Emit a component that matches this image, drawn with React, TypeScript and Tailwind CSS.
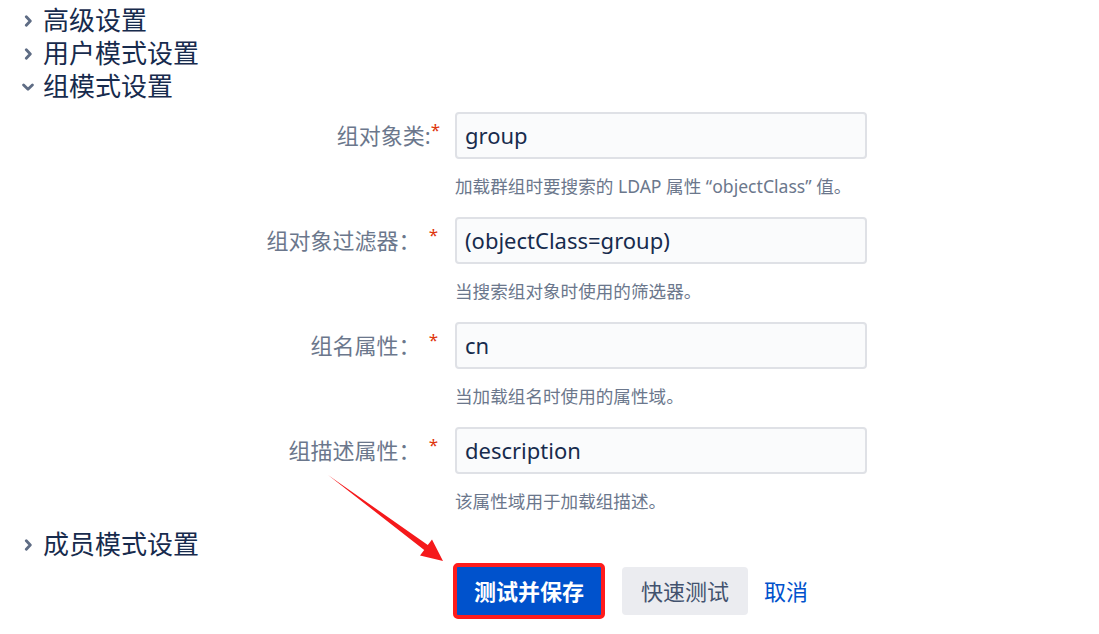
import React from "react";

const FONT = '"Noto Sans", "Noto Sans CJK SC", sans-serif';

function ChevronRight() {
  return (
    <svg width="12" height="12" viewBox="0 0 12 12" className="shrink-0">
      <path d="M4.3 1.8 L8.3 6 L4.3 10.2" fill="none" stroke="#5e6c84" strokeWidth="2.8" strokeLinecap="round" strokeLinejoin="round" />
    </svg>
  );
}

function ChevronDown() {
  return (
    <svg width="12" height="12" viewBox="0 0 12 12" className="shrink-0">
      <path d="M1.6 4 L6 8.2 L10.4 4" fill="none" stroke="#5e6c84" strokeWidth="2.8" strokeLinecap="round" strokeLinejoin="round" />
    </svg>
  );
}

function Heading({ open, text }: { open?: boolean; text: string }) {
  return (
    <div className="flex items-center pl-[22px] gap-[9px] h-[33px] text-[26px] leading-[33px] text-[#172b4d]">
      {open ? <ChevronDown /> : <ChevronRight />}
      <span>{text}</span>
    </div>
  );
}

type Row = { label: string; tight?: boolean; value: string; help: string };

const rows: Row[] = [
  { label: "组对象类:", tight: true, value: "group", help: "加载群组时要搜索的 LDAP 属性 “objectClass” 值。" },
  { label: "组对象过滤器：", value: "(objectClass=group)", help: "当搜索组对象时使用的筛选器。" },
  { label: "组名属性：", value: "cn", help: "当加载组名时使用的属性域。" },
  { label: "组描述属性：", value: "description", help: "该属性域用于加载组描述。" },
];

export default function App() {
  return (
    <div className="relative w-[1099px] h-[634px] bg-white overflow-hidden" style={{ fontFamily: FONT }}>
      <div className="pt-[4px]">
        <Heading text="高级设置" />
        <Heading text="用户模式设置" />
        <Heading open text="组模式设置" />
      </div>

      <div className="mt-[9px] flex flex-col gap-[20px]">
        {rows.map((r) => (
          <div key={r.label} className="flex">
            <div className="w-[440px] h-[47px] flex items-center justify-end text-[22px] text-[#6b778c]">
              <span>{r.label}</span>
              {r.tight ? (
                <span className="self-start mt-[9px] text-[17px] leading-[17px] text-[#de350b]">*</span>
              ) : (
                <span className="self-start mt-[9px] ml-[8px] mr-[2px] text-[17px] leading-[17px] text-[#de350b]">*</span>
              )}
            </div>
            <div className="ml-[15px] w-[412px]">
              <div className="h-[47px] rounded-[4px] border-2 border-[#dfe1e6] bg-[#fafbfc] flex items-center pl-[8px] text-[22px] text-[#172b4d]">
                {r.value}
              </div>
              <div className="mt-[16px] text-[17.6px] leading-[22px] text-[#6b778c] whitespace-nowrap">{r.help}</div>
            </div>
          </div>
        ))}
      </div>

      <div className="mt-[16px]">
        <Heading text="成员模式设置" />
      </div>

      <div className="mt-[2px] pl-[453px] flex items-center">
        <div className="w-[152px] h-[56px] border-[4px] border-[#ff1c1c] rounded-[5px] bg-[#0052cc] flex items-center justify-center text-white font-bold text-[22px]">
          测试并保存
        </div>
        <div className="ml-[17px] h-[48px] px-[19px] rounded-[4px] bg-[#ebecf0] flex items-center text-[22px] text-[#42526e]">
          快速测试
        </div>
        <div className="ml-[16px] text-[22px] text-[#0052cc]">取消</div>
      </div>

      <svg className="absolute left-0 top-0 pointer-events-none" width="1099" height="634">
        <polygon
          points="328,475 427.8,545.1 432,539.5 443,561 420,555.5 424.2,549.9"
          fill="#f5191b"
        />
      </svg>
    </div>
  );
}
